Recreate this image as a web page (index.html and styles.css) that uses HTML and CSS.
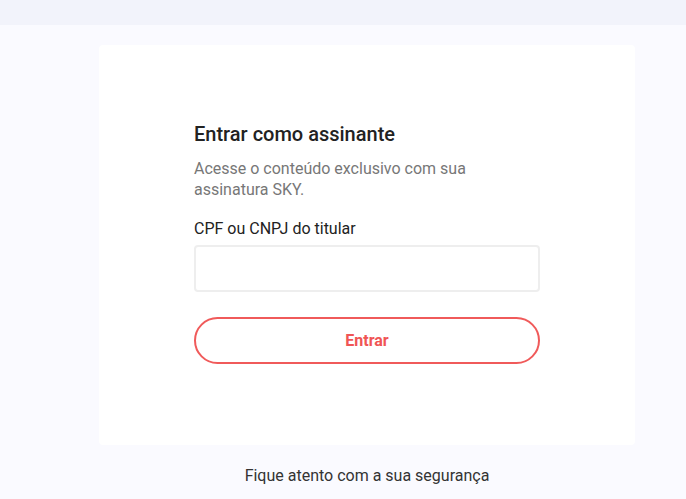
FILE: index.html
```html
<!DOCTYPE html>
<html lang="pt-BR">
<head>
<meta charset="utf-8">
<title>Entrar como assinante</title>
<link rel="stylesheet" href="styles.css">
</head>
<body>
<header class="topbar"></header>
<main class="page">
  <section class="card">
    <form class="login" onsubmit="return false">
      <h1 class="title">Entrar como assinante</h1>
      <p class="subtitle">Acesse o conteúdo exclusivo com sua assinatura SKY.</p>
      <label class="label" for="doc">CPF ou CNPJ do titular</label>
      <input class="input" id="doc" type="text">
      <button class="btn" type="submit">Entrar</button>
    </form>
  </section>
  <p class="footer">Fique atento com a sua segurança</p>
</main>
</body>
</html>
```
FILE: styles.css
```css
* { box-sizing: border-box; }
html, body { margin: 0; padding: 0; }
body {
  font-family: Roboto, "Liberation Sans", Arial, sans-serif;
  background: #fafaff;
  color: #222;
  height: 499px;
  overflow: hidden;
}
.topbar {
  height: 25px;
  background: #f2f3fb;
}
.page {
  width: 536px;
  margin-left: 99px;
  padding-top: 20px;
}
.card {
  background: #fff;
  border-radius: 4px;
  height: 400px;
  padding-top: 77px;
}
.login {
  width: 346px;
  margin: 0 auto;
  display: flex;
  flex-direction: column;
}
.title {
  margin: 0;
  font-size: 20px;
  font-weight: 500;
  line-height: 24px;
  color: #222;
}
.subtitle {
  margin: 12px 0 0;
  font-size: 16px;
  line-height: 21px;
  color: #777;
}
.label {
  margin-top: 18px;
  font-size: 16px;
  line-height: 22px;
  color: #222;
}
.input {
  margin-top: 5px;
  height: 47px;
  border: 2px solid #eee;
  border-radius: 4px;
  background: #fff;
  font: inherit;
  outline: none;
}
.btn {
  margin-top: 25px;
  height: 47px;
  border: 2px solid #f05a5a;
  border-radius: 24px;
  background: #fff;
  color: #f05555;
  font-family: inherit;
  font-size: 16px;
  font-weight: 700;
  cursor: pointer;
}
.footer {
  margin: 20px 0 0;
  text-align: center;
  font-size: 16px;
  line-height: 22px;
  color: #333;
}
```
